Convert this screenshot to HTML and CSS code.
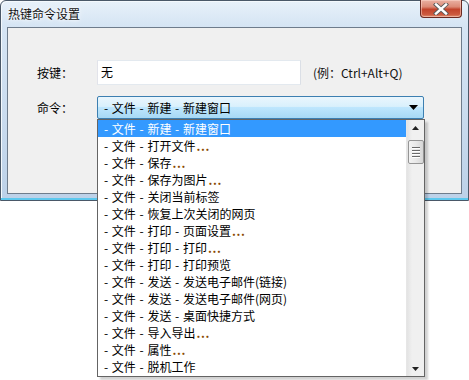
FILE: index.html
```html
<!DOCTYPE html>
<html>
<head>
<meta charset="utf-8">
<link rel="stylesheet" href="styles.css">
</head>
<body>
<div class="screen">
  <div class="window">
    <div class="titlebar">
      <span class="title">热键命令设置</span>
      <div class="close">
        <svg width="20" height="12" viewBox="0 0 20 12"><path d="M5 1.5 L15 10.5 M15 1.5 L5 10.5" stroke="#5a5a5a" stroke-width="4.2" stroke-linecap="square"/><path d="M5 1.5 L15 10.5 M15 1.5 L5 10.5" stroke="#ffffff" stroke-width="2.4" stroke-linecap="square"/></svg>
      </div>
    </div>
    <div class="client">
      <div class="form">
        <label class="lbl">按键：</label>
        <div class="input">无</div>
        <span class="hint">(例：Ctrl+Alt+Q)</span>
        <label class="lbl">命令：</label>
        <div class="combo">
          <span>- 文件 - 新建 - 新建窗口</span>
          <svg width="9" height="5" viewBox="0 0 9 5"><path d="M0 0 H9 L4.5 5 Z" fill="#000"/></svg>
        </div>
      </div>
    </div>
  </div>

  <div class="dropdown">
    <ul class="items">
      <li class="sel">- 文件 - 新建 - 新建窗口</li>
      <li>- 文件 - 打开文件<span class="dots">...</span></li>
      <li>- 文件 - 保存<span class="dots">...</span></li>
      <li>- 文件 - 保存为图片<span class="dots">...</span></li>
      <li>- 文件 - 关闭当前标签</li>
      <li>- 文件 - 恢复上次关闭的网页</li>
      <li>- 文件 - 打印 - 页面设置<span class="dots">...</span></li>
      <li>- 文件 - 打印 - 打印<span class="dots">...</span></li>
      <li>- 文件 - 打印 - 打印预览</li>
      <li>- 文件 - 发送 - 发送电子邮件(链接)</li>
      <li>- 文件 - 发送 - 发送电子邮件(网页)</li>
      <li>- 文件 - 发送 - 桌面快捷方式</li>
      <li>- 文件 - 导入导出<span class="dots">...</span></li>
      <li>- 文件 - 属性<span class="dots">...</span></li>
      <li>- 文件 - 脱机工作</li>
    </ul>
    <div class="scrollbar">
      <svg class="arrow" width="7" height="4" viewBox="0 0 7 4"><path d="M0 4 H7 L3.5 0 Z" fill="#222"/></svg>
      <div class="thumb">
        <i></i><i></i><i></i><i></i>
      </div>
      <div class="track"></div>
      <svg class="arrow" width="7" height="4" viewBox="0 0 7 4"><path d="M0 0 H7 L3.5 4 Z" fill="#222"/></svg>
    </div>
  </div>
</div>
</body>
</html>
```

FILE: styles.css
```css
* { box-sizing: border-box; }
html, body {
  margin: 0;
  padding: 0;
  background: #ffffff;
}
body {
  font-family: "Noto Sans CJK SC", "Noto Sans", sans-serif;
  font-size: 12px;
  color: #000;
}
.screen {
  position: relative;
  width: 469px;
  height: 380px;
  overflow: hidden;
}
.window {
  width: 469px;
  height: 201px;
  border: 1px solid #4a5868;
  border-radius: 6px 6px 0 0;
  background: linear-gradient(180deg, #e8f1fa 0%, #d6e5f4 12%, #c9dbee 60%, #bcd1e8 100%);
  box-shadow: inset 0 -2px 0 #5cc8ee, inset 1px 1px 0 #f4f9fd;
  display: flex;
  flex-direction: column;
}
.titlebar {
  height: 26px;
  display: flex;
  justify-content: space-between;
  align-items: flex-start;
  padding-left: 7px;
}
.title {
  margin-top: 5px;
  font-size: 12px;
  line-height: 16px;
  color: #111;
  text-shadow: 0 0 6px #fff, 0 0 3px #fff;
}
.close {
  margin-right: 6px;
  margin-top: -1px;
  width: 42px;
  height: 18px;
  border: 1px solid #6a2a22;
  border-top: none;
  border-radius: 0 0 4px 4px;
  background: linear-gradient(180deg, #eab1a3 0%, #dc8a76 40%, #c2432b 55%, #cc5a3f 85%, #e09070 100%);
  box-shadow: inset 0 0 0 1px rgba(255,220,210,0.5);
  display: flex;
  align-items: center;
  justify-content: center;
}
.client {
  margin: 0 6px 0 6px;
  height: 167px;
  border: 1px solid #6e7c8c;
  background: #f0f0f0;
  padding: 32px 0 0 29px;
}
.form {
  display: grid;
  grid-template-columns: 60px 204px auto;
  grid-template-rows: 25px 23px;
  row-gap: 11px;
  align-items: center;
}
.lbl {
  font-size: 12px;
  line-height: 16px;
}
.input {
  height: 25px;
  background: #fff;
  border: 1px solid #abadb3;
  border-top-color: #e3e9ef;
  border-left-color: #e2e3ea;
  border-right-color: #dbdfe6;
  border-bottom-color: #e3e9ef;
  padding: 3px 0 0 3px;
  font-size: 12px;
  line-height: 16px;
}
.hint {
  margin-left: 12px;
  font-size: 12px;
  color: #111;
}
.combo {
  grid-column: 2 / 4;
  width: 327px;
  height: 23px;
  border: 1px solid #3c7fb1;
  border-radius: 2px;
  background: linear-gradient(180deg, #eaf6fd 0%, #d9f0fc 45%, #bee6fd 50%, #a7d9f5 100%);
  display: flex;
  align-items: center;
  justify-content: space-between;
  padding: 0 5px 0 6px;
  font-size: 12px;
  word-spacing: 1px;
}
.combo span { line-height: 16px; }
.dropdown {
  position: absolute;
  left: 97px;
  top: 119px;
  width: 328px;
  height: 258px;
  background: #fff;
  border: 1px solid #646464;
  display: flex;
  box-shadow: 3px 3px 2px rgba(0,0,0,0.18);
}
.items {
  list-style: none;
  margin: 0;
  padding: 0;
  flex: 1;
}
.items li {
  height: 17px;
  line-height: 17px;
  padding-left: 6px;
  font-size: 12px;
  white-space: nowrap;
  word-spacing: 1px;
}
.items li.sel {
  background: #3399ff;
  color: #fff;
}
.dots {
  color: #8a4a00;
  font-weight: bold;
  letter-spacing: 0.6px;
  margin-left: 1px;
}
.scrollbar {
  width: 18px;
  background: linear-gradient(90deg, #e3e3e3 0%, #f0f0f0 30%, #f0f0f0 100%);
  border-left: 1px solid #e6e6e6;
  display: flex;
  flex-direction: column;
  align-items: center;
  padding: 6px 0 5px;
}
.arrow { display: block; flex: none; }
.thumb {
  margin-top: 10px;
  width: 16px;
  height: 24px;
  border: 1px solid #959595;
  border-radius: 2px;
  background: linear-gradient(90deg, #f3f3f3 0%, #e8e8e8 50%, #d6d6d6 100%);
  display: flex;
  flex-direction: column;
  align-items: center;
  justify-content: center;
  gap: 2px;
}
.thumb i {
  display: block;
  width: 8px;
  height: 1px;
  background: #6a6a6a;
  box-shadow: 0 1px 0 #fff;
}
.track { flex: 1; }
```
